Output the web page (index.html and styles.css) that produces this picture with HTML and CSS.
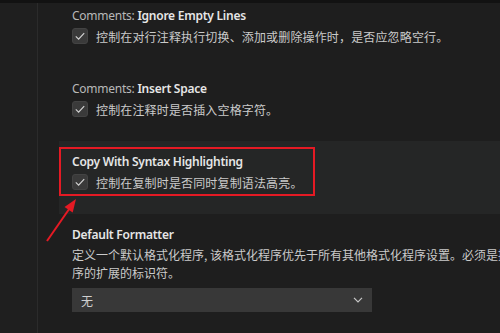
FILE: index.html
```html
<!DOCTYPE html>
<html lang="zh">
<head>
<meta charset="utf-8">
<link rel="stylesheet" href="styles.css">
</head>
<body>
<div class="app">
  <div class="toc"></div>
  <div class="main">
    <div class="list">
      <div class="item">
        <div class="title"><span class="cat">Comments: </span><span class="name">Ignore Empty Lines</span></div>
        <div class="row">
          <span class="check"><svg viewBox="0 0 16 16" width="16" height="16"><path d="M3.2 8.4 L6.4 11.6 L12.8 4.6" fill="none" stroke="#d4d4d4" stroke-width="1.3"/></svg></span>
          <span class="desc">控制在对行注释执行切换、添加或删除操作时，是否应忽略空行。</span>
        </div>
      </div>
      <div class="item">
        <div class="title"><span class="cat">Comments: </span><span class="name">Insert Space</span></div>
        <div class="row">
          <span class="check"><svg viewBox="0 0 16 16" width="16" height="16"><path d="M3.2 8.4 L6.4 11.6 L12.8 4.6" fill="none" stroke="#d4d4d4" stroke-width="1.3"/></svg></span>
          <span class="desc">控制在注释时是否插入空格字符。</span>
        </div>
      </div>
      <div class="item focused">
        <div class="title"><span class="name">Copy With Syntax Highlighting</span></div>
        <div class="row">
          <span class="check"><svg viewBox="0 0 16 16" width="16" height="16"><path d="M3.2 8.4 L6.4 11.6 L12.8 4.6" fill="none" stroke="#d4d4d4" stroke-width="1.3"/></svg></span>
          <span class="desc">控制在复制时是否同时复制语法高亮。</span>
        </div>
        <div class="redbox"></div>
      </div>
      <div class="item">
        <div class="title"><span class="name">Default Formatter</span></div>
        <div class="para">定义一个默认格式化程序, 该格式化程序优先于所有其他格式化程序设置。必须是提供格式化程序的扩展的标识符。</div>
        <div class="select">
          <span class="value">无</span>
          <svg class="chev" viewBox="0 0 10 6" width="10" height="6"><path d="M1 0.8 L5 4.8 L9 0.8" fill="none" stroke="#c8c8c8" stroke-width="1.2"/></svg>
        </div>
      </div>
    </div>
  </div>
  <div class="shadow"></div>
  <svg class="arrow" width="500" height="333" viewBox="0 0 500 333">
    <line x1="47" y1="241" x2="69.5" y2="208.5" stroke="#e51a24" stroke-width="2"/>
    <polygon points="76,199 72.7,212.5 64.5,206.9" fill="#e51a24"/>
  </svg>
</div>
</body>
</html>
```
FILE: styles.css
```css
html, body {
  margin: 0;
  padding: 0;
  background: #1e1e1e;
  overflow: hidden;
}
.app {
  position: relative;
  display: flex;
  width: 500px;
  height: 333px;
  overflow: hidden;
  font-family: "Noto Sans", "Noto Sans CJK SC", sans-serif;
}
.toc {
  width: 37px;
  flex: none;
  background: #1f1f1f;
  border-right: 1px solid #2b2b2b;
}
.main {
  flex: 1;
  min-width: 0;
  padding-left: 21px;
  background: #1e1e1e;
}
.list {
  margin-top: -5px;
}
.item {
  position: relative;
  height: 73px;
  box-sizing: border-box;
  padding: 12px 0 0 13px;
}
.item.focused {
  background: #252626;
}
.title {
  height: 18px;
  line-height: 18px;
  font-size: 12px;
  letter-spacing: -0.25px;
  white-space: nowrap;
}
.cat {
  color: #b8b8b8;
}
.name {
  color: #e6e6e6;
  font-weight: 600;
}
.row {
  display: flex;
  align-items: center;
  gap: 8px;
  margin-top: 3px;
  height: 16px;
}
.check {
  width: 16px;
  height: 16px;
  box-sizing: border-box;
  border-radius: 3px;
  background: #3a3a3a;
  border: 1px solid #434343;
  display: flex;
  align-items: center;
  justify-content: center;
  flex: none;
}
.check svg {
  width: 14px;
  height: 14px;
}
.desc, .para {
  font-family: "Noto Sans CJK SC", sans-serif;
  font-size: 12px;
  letter-spacing: 0.15px;
  color: #cacaca;
  white-space: nowrap;
}
.para {
  white-space: normal;
  letter-spacing: 0;
  width: 504px;
  line-height: 18px;
  margin-top: 2px;
}
.select {
  margin-top: 6px;
  width: 300px;
  height: 24px;
  box-sizing: border-box;
  background: #383838;
  display: flex;
  align-items: center;
  justify-content: space-between;
  padding: 0 9px 0 9px;
}
.value {
  font-family: "Noto Sans CJK SC", sans-serif;
  font-size: 12px;
  color: #d0d0d0;
}
.redbox {
  position: absolute;
  left: 0;
  top: 6px;
  width: 256px;
  height: 49px;
  box-sizing: border-box;
  border: 2px solid #e51a24;
}
.shadow {
  position: absolute;
  left: 0;
  top: 0;
  width: 500px;
  height: 3px;
  background: #121212;
}
.arrow {
  position: absolute;
  left: 0;
  top: 0;
  pointer-events: none;
}
```
